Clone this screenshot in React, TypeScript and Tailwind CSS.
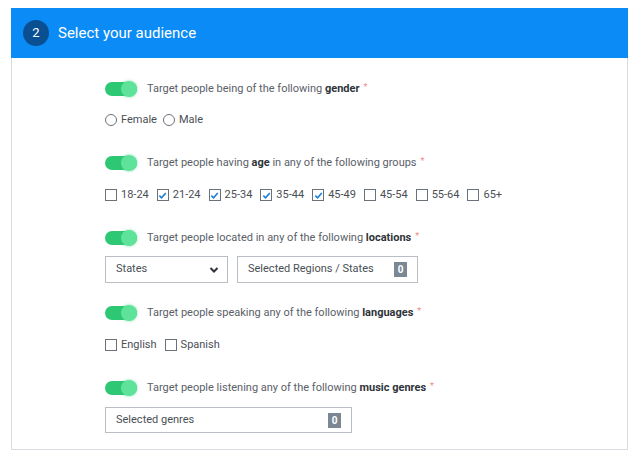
import React from "react";

const font = { fontFamily: "Roboto, 'Liberation Sans', sans-serif" };

function Toggle() {
  return (
    <div className="relative w-[32px] h-[14px] rounded-full bg-[#2ec874] shrink-0">
      <div className="absolute right-0 top-[-1px] w-[16px] h-[16px] rounded-full bg-[#5fe39b] shadow-[0_0_3px_rgba(46,200,116,0.6)]" />
    </div>
  );
}

function Heading({ pre, bold, post = "" }: { pre: string; bold: string; post?: string }) {
  return (
    <div className="flex items-center h-4">
      <Toggle />
      <span className="ml-[10px] text-[11px] text-[#5a6068]">
        {pre}
        <b className="font-bold text-[#2f343a]">{bold}</b>
        {post}
        <span className="text-[#ee8a8a] ml-[4px] text-[9px] align-top">*</span>
      </span>
    </div>
  );
}

function Radio({ label }: { label: string }) {
  return (
    <label className="flex items-center gap-[4px] mr-[6px]">
      <span className="w-[12px] h-[12px] rounded-full border border-[#6b7178] bg-white" />
      <span className="text-[11px] text-[#4a4f55]">{label}</span>
    </label>
  );
}

function Check({ label, checked = false }: { label: string; checked?: boolean }) {
  return (
    <label className="flex items-center gap-[4px] mr-[8px]">
      <span className="w-[12px] h-[12px] border border-[#6b7178] bg-white flex items-center justify-center">
        {checked && (
          <svg width="9" height="9" viewBox="0 0 10 10">
            <path d="M1.5 5.2 L4 7.6 L8.6 2.2" fill="none" stroke="#1f7fd8" strokeWidth="1.8" />
          </svg>
        )}
      </span>
      <span className="text-[11px] text-[#4a4f55]">{label}</span>
    </label>
  );
}

function Badge() {
  return (
    <span className="w-[13px] h-[15px] bg-[#7c8794] text-white text-[10px] font-bold flex items-center justify-center">
      0
    </span>
  );
}

export default function App() {
  const ages: [string, boolean][] = [
    ["18-24", false],
    ["21-24", true],
    ["25-34", true],
    ["35-44", true],
    ["45-49", true],
    ["45-54", false],
    ["55-64", false],
    ["65+", false],
  ];

  return (
    <div className="w-[638px] h-[460px] bg-white pt-[8px] pl-[11px]" style={font}>
      <div className="w-[617px] h-[442px] border border-[#d9dde2] border-t-0">
        <div className="h-[50px] bg-[#0b8bf5] flex items-center pl-[12px] -ml-px -mr-px">
          <div className="w-[26px] h-[26px] rounded-full bg-[#0b4f93] text-white text-[13px] flex items-center justify-center">
            2
          </div>
          <span className="ml-[9px] text-white text-[15px]">Select your audience</span>
        </div>

        <div className="pl-[93px] pt-[23px]">
          <Heading pre="Target people being of the following " bold="gender" />
          <div className="flex items-center h-4 mt-[15px]">
            <Radio label="Female" />
            <Radio label="Male" />
          </div>

          <div className="mt-[27px]">
            <Heading pre="Target people having " bold="age" post=" in any of the following groups" />
          </div>
          <div className="flex items-center h-4 mt-[16px]">
            {ages.map(([a, c]) => (
              <Check key={a} label={a} checked={c} />
            ))}
          </div>

          <div className="mt-[27px]">
            <Heading pre="Target people located in any of the following " bold="locations" />
          </div>
          <div className="flex mt-[10px] gap-[9px]">
            <div className="w-[123px] h-[27px] border border-[#b9bec4] flex items-center justify-between pl-[10px] pr-[8px]">
              <span className="text-[11px] text-[#4a4f55]">States</span>
              <svg width="10" height="8" viewBox="0 0 10 8">
                <path d="M1.5 2 L5 5.5 L8.5 2" fill="none" stroke="#2f343a" strokeWidth="2" />
              </svg>
            </div>
            <div className="w-[181px] h-[27px] border border-[#b9bec4] flex items-center justify-between pl-[10px] pr-[10px]">
              <span className="text-[11px] text-[#4a4f55]">Selected Regions / States</span>
              <Badge />
            </div>
          </div>

          <div className="mt-[22px]">
            <Heading pre="Target people speaking any of the following " bold="languages" />
          </div>
          <div className="flex items-center h-4 mt-[16px]">
            <Check label="English" />
            <Check label="Spanish" />
          </div>

          <div className="mt-[27px]">
            <Heading pre="Target people listening any of the following " bold="music genres" />
          </div>
          <div className="mt-[11px] w-[247px] h-[26px] border border-[#b9bec4] flex items-center justify-between pl-[10px] pr-[10px]">
            <span className="text-[11px] text-[#4a4f55]">Selected genres</span>
            <Badge />
          </div>
        </div>
      </div>
    </div>
  );
}
